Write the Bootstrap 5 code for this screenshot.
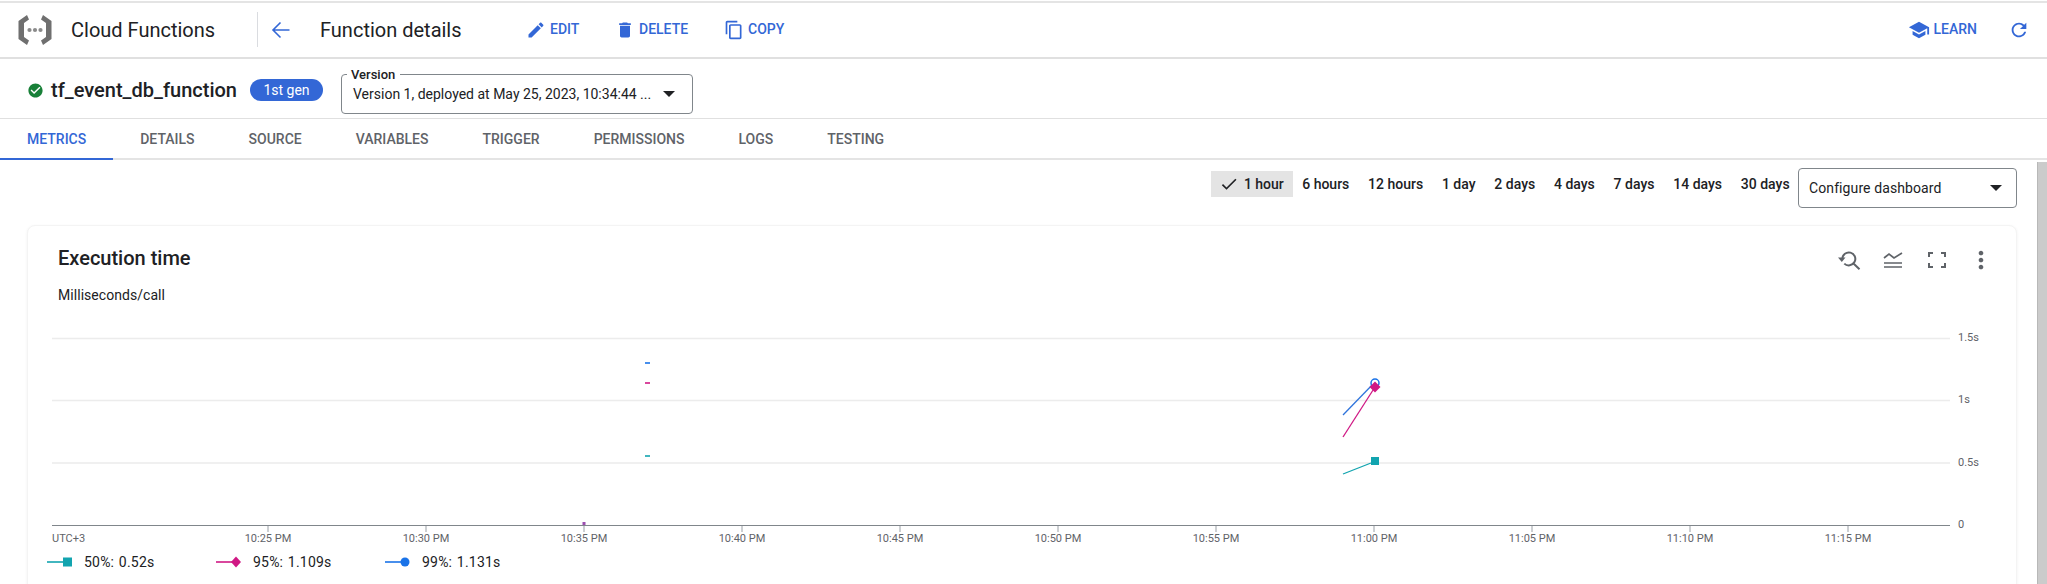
<!DOCTYPE html>
<html lang="en">
<head>
    <meta charset="UTF-8">
    <meta name="viewport" content="width=device-width, initial-scale=1.0">
    <title>Function details</title>
    <link href="https://cdn.jsdelivr.net/npm/bootstrap@5.3.0/dist/css/bootstrap.min.css" rel="stylesheet">
    <style>
        html, body { height: 100%; overflow: hidden; }
        body { background: #fff; color: #202124; font-family: Roboto, "Liberation Sans", sans-serif; font-size: 14px; }
        .page-wrap { height: 584px; overflow: hidden; }

        .top-bar { height: 58px; border-top: 2px solid #e4e4e4; border-bottom: 2px solid #e0e0e0; margin-top: 1px; }
        .logo-box { width: 34px; height: 30px; margin-left: 18px; }
        .product-name { font-size: 20px; margin-left: 19px; width: 186px; }
        .bar-divider { width: 1px; height: 35px; background: #dadce0; }
        .back-link { margin-left: 13px; width: 20px; color: #3367d6; }
        .page-title { font-size: 20px; margin-left: 29px; width: 206px; }
        .action-btn { color: #3367d6; font-size: 14px; font-weight: 500; padding: 0; border: 0; display: flex; align-items: center; gap: 4px; text-transform: uppercase; }
        .action-btn:hover { color: #3367d6; }
        .act-edit { width: 89px; }
        .act-delete { width: 109px; }
        .act-learn { margin-right: 31px; }
        .act-refresh { margin-right: 17px; }

        .name-row { height: 61px; border-bottom: 1px solid #e0e0e0; padding-left: 27px; padding-top: 4px; }
        .fn-name { font-size: 20px; font-weight: 500; margin-left: 7px; }
        .gen-pill { background: #3367d6; color: #fff; font-size: 14px; font-weight: 400; width: 73px; height: 22px; margin-left: 13px; margin-right: 18px; padding: 0; line-height: 22px; }
        .version-box { position: relative; width: 352px; height: 40px; border: 1px solid #80868b; border-radius: 4px; padding: 0 17px 0 11px; margin-top: 8px; }
        .version-label { position: absolute; left: 5px; top: -8px; background: #fff; padding: 0 5px 0 4px; font-size: 13px; font-weight: 500; line-height: 15px; }
        .caret-down { width: 0; height: 0; border-left: 6px solid transparent; border-right: 6px solid transparent; border-top: 6px solid #202124; }

        .tab-strip { height: 41px; border-bottom: 2px solid #e4e4e4; flex-wrap: nowrap; }
        .tab-strip .nav-link { color: #5f6368; font-size: 14px; font-weight: 500; padding: 0 27px; height: 41px; line-height: 40px; text-transform: uppercase; }
        .tab-strip .nav-link.active { color: #3367d6; border-bottom: 2px solid #3367d6; }

        .body-area { height: 424px; }
        .main-col { padding: 8px 20px 0 27px; min-width: 0; }
        .fake-scroll { width: 10px; background: #cbcbcb; border-left: 1px solid #b8b8b8; margin-top: 2px; }

        .range-btn { font-size: 14px; font-weight: 500; color: #202124; padding: 0 9.4px; height: 26px; line-height: 26px; border: 0; border-radius: 0; margin-top: 3px; }
        .range-btn.picked { background: #e4e4e4; padding: 0 9px 0 8px; display: flex; align-items: center; gap: 5px; }
        .dash-select { width: 219px; height: 40px; border: 1px solid #80868b; border-radius: 4px; padding: 0 14px 0 10px; margin-left: -1px; letter-spacing: .1px; }

        .chart-card { margin-top: 17px; height: 400px; border: 1px solid #f4f4f4; border-radius: 8px; box-shadow: 0 1px 3px rgba(60,64,67,.07); }
        .card-head { padding: 15px 13px 0 30px; height: 94px; }
        .chart-title { font-size: 20px; font-weight: 500; margin: 6px 0 0; line-height: 22px; }
        .chart-sub { margin-top: 17px; line-height: 18px; letter-spacing: .05px; }
        .tool-icons { margin-top: 7px; color: #5f6368; }
        .tool-slot { width: 44px; height: 24px; }
        .chart-svg { display: block; width: 1988px; height: 232px; }
        .chart-svg text { font-family: Roboto, "Liberation Sans", sans-serif; font-size: 11px; fill: #5f6368; }
        .legend-row { padding-left: 19px; height: 20px; }
        .legend-item { width: 169px; gap: 12px; font-size: 14px; word-spacing: 1px; letter-spacing: .2px; }
    </style>
</head>
<body>
<div class="page-wrap d-flex flex-column">

  <!-- Header -->
  <div class="top-bar d-flex align-items-center">
    <svg class="logo-box" viewBox="0 0 34 30">
      <path d="M9 0 L0.5 6 V24 L9 30 L11 25.5 L6 22 V8 L11 4.5 Z" fill="#6f6f6f"/>
      <path d="M25 0 L33.5 6 V24 L25 30 L23 25.5 L28 22 V8 L23 4.5 Z" fill="#6f6f6f"/>
      <circle cx="11.5" cy="15" r="2.1" fill="#8a8a8a"/><circle cx="17" cy="15" r="2.1" fill="#8a8a8a"/><circle cx="22.5" cy="15" r="2.1" fill="#8a8a8a"/>
    </svg>
    <div class="product-name">Cloud Functions</div>
    <div class="bar-divider"></div>
    <a class="back-link d-flex" href="#">
      <svg width="20" height="20" viewBox="0 0 20 20" fill="none" stroke="currentColor" stroke-width="1.6"><path d="M18.5 10H2M9.5 2.5 2 10l7.5 7.5"/></svg>
    </a>
    <div class="page-title">Function details</div>
    <a class="btn action-btn act-edit" href="#">
      <svg width="20" height="20" viewBox="0 0 24 24" fill="currentColor"><path d="M3 17.25V21h3.75L17.81 9.94l-3.75-3.75L3 17.25zM20.71 7.04c.39-.39.39-1.02 0-1.41l-2.34-2.34c-.39-.39-1.02-.39-1.41 0l-1.83 1.83 3.75 3.75 1.83-1.83z"/></svg>Edit</a>
    <a class="btn action-btn act-delete" href="#">
      <svg width="20" height="20" viewBox="0 0 24 24" fill="currentColor"><path d="M6 19c0 1.1.9 2 2 2h8c1.1 0 2-.9 2-2V7H6v12zM19 4h-3.5l-1-1h-5l-1 1H5v2h14V4z"/></svg>Delete</a>
    <a class="btn action-btn" href="#">
      <svg width="20" height="20" viewBox="0 0 24 24" fill="currentColor"><path d="M16 1H4c-1.1 0-2 .9-2 2v14h2V3h12V1zm3 4H8c-1.1 0-2 .9-2 2v14c0 1.1.9 2 2 2h11c1.1 0 2-.9 2-2V7c0-1.1-.9-2-2-2zm0 16H8V7h11v14z"/></svg>Copy</a>
    <a class="btn action-btn act-learn ms-auto" href="#">
      <svg width="22" height="22" viewBox="0 0 24 24" fill="currentColor"><path d="M5 13.18v4L12 21l7-3.82v-4L12 17l-7-3.82zM12 3L1 9l11 6 9-4.91V17h2V9L12 3z"/></svg>Learn</a>
    <a class="btn action-btn act-refresh" href="#">
      <svg width="22" height="22" viewBox="0 0 24 24" fill="currentColor"><path d="M17.65 6.35C16.2 4.9 14.21 4 12 4c-4.42 0-7.99 3.58-7.99 8s3.57 8 7.99 8c3.73 0 6.84-2.55 7.73-6h-2.08c-.82 2.33-3.04 4-5.65 4-3.31 0-6-2.69-6-6s2.69-6 6-6c1.66 0 3.14.69 4.22 1.78L13 11h7V4l-2.35 2.35z"/></svg></a>
  </div>

  <!-- Function name and version -->
  <div class="name-row d-flex align-items-center">
    <svg width="17" height="17" viewBox="0 0 24 24" fill="#188038"><path d="M12 2C6.48 2 2 6.48 2 12s4.48 10 10 10 10-4.48 10-10S17.52 2 12 2zm-2 15l-5-5 1.41-1.41L10 14.17l7.59-7.59L19 8l-9 9z"/></svg>
    <div class="fn-name">tf_event_db_function</div>
    <span class="badge rounded-pill gen-pill">1st gen</span>
    <div class="version-box d-flex align-items-center justify-content-between">
      <span class="version-label">Version</span>
      <span>Version 1, deployed at May 25, 2023, 10:34:44 ...</span>
      <span class="caret-down"></span>
    </div>
  </div>

  <!-- Tabs -->
  <ul class="nav tab-strip">
    <li class="nav-item"><a class="nav-link active" href="#">Metrics</a></li>
    <li class="nav-item"><a class="nav-link" href="#">Details</a></li>
    <li class="nav-item"><a class="nav-link" href="#">Source</a></li>
    <li class="nav-item"><a class="nav-link" href="#">Variables</a></li>
    <li class="nav-item"><a class="nav-link" href="#">Trigger</a></li>
    <li class="nav-item"><a class="nav-link" href="#">Permissions</a></li>
    <li class="nav-item"><a class="nav-link" href="#">Logs</a></li>
    <li class="nav-item"><a class="nav-link" href="#">Testing</a></li>
  </ul>

  <div class="body-area d-flex">
    <div class="main-col flex-grow-1">

      <!-- Time range -->
      <div class="d-flex justify-content-end align-items-start">
        <button class="btn range-btn picked">
          <svg width="20" height="20" viewBox="0 0 24 24" fill="#202124"><path d="M9 16.17L4.83 12l-1.42 1.41L9 19 21 7l-1.41-1.41z"/></svg>1 hour</button>
        <button class="btn range-btn">6 hours</button>
        <button class="btn range-btn">12 hours</button>
        <button class="btn range-btn">1 day</button>
        <button class="btn range-btn">2 days</button>
        <button class="btn range-btn">4 days</button>
        <button class="btn range-btn">7 days</button>
        <button class="btn range-btn">14 days</button>
        <button class="btn range-btn">30 days</button>
        <div class="dash-select d-flex align-items-center justify-content-between">
          <span>Configure dashboard</span>
          <span class="caret-down"></span>
        </div>
      </div>

      <!-- Chart card -->
      <div class="card chart-card">
        <div class="card-head d-flex justify-content-between align-items-start">
          <div>
            <h5 class="chart-title">Execution time</h5>
            <div class="chart-sub">Milliseconds/call</div>
          </div>
          <div class="tool-icons d-flex align-items-center">
            <div class="tool-slot d-flex align-items-center justify-content-center">
              <svg width="24" height="24" viewBox="0 0 24 24" fill="none" stroke="currentColor" stroke-width="2"><path d="M5.3 10.8a6.5 6.5 0 1 1 2 4.8M16.5 15.5l6 5.8"/><path d="M1 9.5h7.5L4.8 14z" fill="currentColor" stroke="none"/></svg>
            </div>
            <div class="tool-slot d-flex align-items-center justify-content-center">
              <svg width="20" height="20" viewBox="0 0 20 20" fill="none" stroke="currentColor" stroke-width="1.7"><path d="M1 8l5-4 5 4 8-5M1 13h18M1 17h18"/></svg>
            </div>
            <div class="tool-slot d-flex align-items-center justify-content-center">
              <svg width="18" height="16" viewBox="0 0 18 16" fill="none" stroke="currentColor" stroke-width="2"><path d="M1 5V1h4M13 1h4v4M17 11v4h-4M5 15H1v-4"/></svg>
            </div>
            <div class="tool-slot d-flex align-items-center justify-content-center">
              <svg width="28" height="28" viewBox="0 0 24 24" fill="currentColor"><path d="M12 8c1.1 0 2-.9 2-2s-.9-2-2-2-2 .9-2 2 .9 2 2 2zm0 2c-1.1 0-2 .9-2 2s.9 2 2 2 2-.9 2-2-.9-2-2-2zm0 6c-1.1 0-2 .9-2 2s.9 2 2 2 2-.9 2-2-.9-2-2-2z"/></svg>
            </div>
          </div>
        </div>

        <!-- viewBox uses page coordinates -->
        <svg class="chart-svg" viewBox="28 320 1988 232">
          <g stroke="#ececec" stroke-width="1.5">
            <path d="M52 338.5H1950M52 400.5H1950M52 463H1950"/>
          </g>
          <path d="M52 525.5H1950" stroke="#80868b" stroke-width="1"/>
          <path d="M268 526v6M426 526v6M584 526v6M742 526v6M900 526v6M1058 526v6M1216 526v6M1374 526v6M1532 526v6M1690 526v6M1848 526v6" stroke="#9aa0a6"/>

          <text x="52" y="542">UTC+3</text>
          <g text-anchor="middle">
            <text x="268" y="542">10:25 PM</text>
            <text x="426" y="542">10:30 PM</text>
            <text x="584" y="542">10:35 PM</text>
            <text x="742" y="542">10:40 PM</text>
            <text x="900" y="542">10:45 PM</text>
            <text x="1058" y="542">10:50 PM</text>
            <text x="1216" y="542">10:55 PM</text>
            <text x="1374" y="542">11:00 PM</text>
            <text x="1532" y="542">11:05 PM</text>
            <text x="1690" y="542">11:10 PM</text>
            <text x="1848" y="542">11:15 PM</text>
          </g>
          <text x="1958" y="341">1.5s</text>
          <text x="1958" y="403">1s</text>
          <text x="1958" y="466">0.5s</text>
          <text x="1958" y="528">0</text>

          <path d="M645 363h5" stroke="#1a73e8" stroke-width="1.6"/>
          <path d="M645 383h5" stroke="#d01884" stroke-width="1.6"/>
          <path d="M645 456h5" stroke="#12a4af" stroke-width="1.6"/>
          <rect x="582.5" y="522" width="3" height="3" fill="#9c4fb0"/>

          <path d="M1343 415 1375 382" stroke="#2f74dc" stroke-width="1.3" fill="none"/>
          <circle cx="1375" cy="383" r="4" fill="#fff" stroke="#1a73e8" stroke-width="1.5"/>
          <path d="M1343 437 1375 387" stroke="#d01884" stroke-width="1.3" fill="none"/>
          <path d="M1375 381.5 1380.5 387 1375 392.5 1369.5 387Z" fill="#d01884"/>
          <path d="M1343 474 1371 463" stroke="#12a4af" stroke-width="1.3" fill="none"/>
          <rect x="1371" y="457" width="8" height="8" fill="#12a4af"/>
        </svg>

        <div class="legend-row d-flex align-items-center">
          <div class="legend-item d-flex align-items-center">
            <svg width="25" height="12" viewBox="0 0 25 12"><path d="M0 6H16" stroke="#12a4af" stroke-width="1.6"/><rect x="16" y="1.5" width="9" height="9" fill="#12a4af"/></svg>50%: 0.52s</div>
          <div class="legend-item d-flex align-items-center">
            <svg width="25" height="12" viewBox="0 0 25 12"><path d="M0 6H16" stroke="#d01884" stroke-width="1.6"/><path d="M20 .5 25 6 20 11.5 15 6Z" fill="#d01884"/></svg>95%: 1.109s</div>
          <div class="legend-item d-flex align-items-center">
            <svg width="25" height="12" viewBox="0 0 25 12"><path d="M0 6H16" stroke="#1a73e8" stroke-width="1.6"/><circle cx="20" cy="6" r="4.5" fill="#1a73e8"/></svg>99%: 1.131s</div>
        </div>
      </div>
    </div>
    <div class="fake-scroll flex-shrink-0"></div>
  </div>
</div>
<script src="https://cdn.jsdelivr.net/npm/bootstrap@5.3.0/dist/js/bootstrap.bundle.min.js"></script>
</body>
</html>
